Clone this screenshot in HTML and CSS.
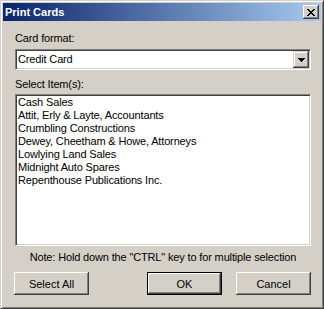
FILE: index.html
```html
<!DOCTYPE html>
<html>
<head>
<meta charset="utf-8">
<title>Print Cards</title>
<link rel="stylesheet" href="styles.css">
</head>
<body>
<div class="window">
  <div class="titlebar">
    <span class="title">Print Cards</span>
    <button class="close" type="button"><svg class="close-glyph" width="8" height="7" viewBox="0 0 8 7" shape-rendering="crispEdges"><path fill="#000" d="M0 0h2v1H0z M6 0h2v1H6z M1 1h2v1H1z M5 1h2v1H5z M2 2h4v1H2z M3 3h2v1H3z M2 4h4v1H2z M1 5h2v1H1z M5 5h2v1H5z M0 6h2v1H0z M6 6h2v1H6z"/></svg></button>
  </div>
  <div class="content">
    <div class="label">Card format:</div>
    <div class="combo">
      <span class="combo-text">Credit Card</span>
      <span class="combo-btn"><svg width="7" height="4" viewBox="0 0 7 4" shape-rendering="crispEdges"><path fill="#000" d="M0 0h7v1H0z M1 1h5v1H1z M2 2h3v1H2z M3 3h1v1H3z"/></svg></span>
    </div>
    <div class="label label-items">Select Item(s):</div>
    <ul class="listbox">
      <li>Cash Sales</li>
      <li>Attit, Erly &amp; Layte, Accountants</li>
      <li>Crumbling Constructions</li>
      <li>Dewey, Cheetham &amp; Howe, Attorneys</li>
      <li>Lowlying Land Sales</li>
      <li>Midnight Auto Spares</li>
      <li>Repenthouse Publications Inc.</li>
    </ul>
    <div class="note">Note: Hold down the "CTRL" key to for multiple selection</div>
    <div class="buttons">
      <button class="btn btn-selectall" type="button">Select All</button>
      <div class="btn-group">
        <button class="btn btn-default" type="button">OK</button>
        <button class="btn" type="button">Cancel</button>
      </div>
    </div>
  </div>
</div>
</body>
</html>
```

FILE: styles.css
```css
* {
  box-sizing: border-box;
  margin: 0;
  padding: 0;
}

html, body {
  width: 324px;
  height: 309px;
  overflow: hidden;
  background: #d4d0c8;
}

body {
  font-family: "Liberation Sans", Arial, sans-serif;
  font-size: 11px;
  letter-spacing: -0.15px;
  color: #000;
}

.window {
  width: 324px;
  height: 309px;
  background: #d4d0c8;
  border: 1px solid;
  border-color: #d4d0c8 #404040 #404040 #d4d0c8;
  box-shadow: inset 1px 1px #fff, inset -1px -1px #808080;
  padding: 2px;
  display: flex;
  flex-direction: column;
}

.titlebar {
  height: 18px;
  flex: none;
  background: linear-gradient(to right, #0a246a, #a6caf0);
  display: flex;
  align-items: center;
  justify-content: space-between;
  padding: 0 2px;
}

.title {
  color: #fff;
  font-weight: bold;
  font-size: 11px;
  letter-spacing: 0;
  line-height: 13px;
}

.close {
  width: 16px;
  height: 14px;
  background: #d4d0c8;
  border: none;
  box-shadow: inset -1px -1px #404040, inset 1px 1px #fff, inset -2px -2px #808080;
  display: flex;
  align-items: center;
  justify-content: center;
}

.close-glyph {
  display: block;
}

.content {
  flex: 1;
  display: flex;
  flex-direction: column;
  padding: 11px 10px 0 12px;
}

.label {
  line-height: 13px;
}

.label-items {
  margin-top: 8px;
}

.combo {
  margin-top: 4px;
  height: 21px;
  background: #fff;
  display: flex;
  align-items: center;
  border: 1px solid;
  border-color: #808080 #fff #fff #808080;
  box-shadow: inset 1px 1px #404040, inset -1px -1px #d4d0c8;
  padding: 1px 1px 1px 2px;
}

.combo-text {
  flex: 1;
  line-height: 13px;
}

.combo-btn {
  width: 16px;
  height: 17px;
  background: #d4d0c8;
  box-shadow: inset -1px -1px #404040, inset 1px 1px #d4d0c8, inset -2px -2px #808080, inset 2px 2px #fff;
  display: flex;
  align-items: center;
  justify-content: center;
}

.combo-btn svg {
  display: block;
}

.listbox {
  list-style: none;
  margin-top: 3px;
  height: 152px;
  background: #fff;
  border: 1px solid;
  border-color: #808080 #fff #fff #808080;
  box-shadow: inset 1px 1px #404040, inset -1px -1px #d4d0c8;
  padding: 1px 1px 1px 2px;
}

.listbox li {
  line-height: 13px;
  white-space: nowrap;
}

.note {
  margin-top: 5px;
  line-height: 13px;
  text-align: center;
}

.buttons {
  margin-top: 8px;
  display: flex;
}

.btn-group {
  margin-left: auto;
  display: flex;
  gap: 14px;
}

.btn {
  width: 75px;
  height: 23px;
  background: #d4d0c8;
  border: none;
  font: inherit;
  color: #000;
  box-shadow: inset -1px -1px #404040, inset 1px 1px #fff, inset -2px -2px #808080;
}

.btn-selectall {
  margin-left: -1px;
}

.btn-default {
  border: 1px solid #000;
}
```
